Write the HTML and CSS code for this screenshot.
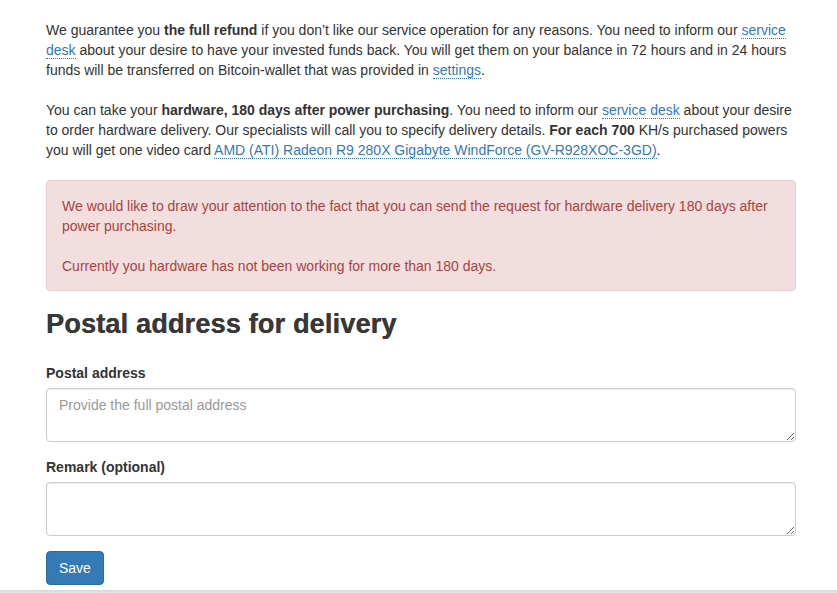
FILE: index.html
```html
<!DOCTYPE html>
<html lang="en">
<head>
<meta charset="utf-8">
<title>Hardware delivery</title>
<link rel="stylesheet" href="styles.css">
</head>
<body>
<div class="container">
  <p class="text">We guarantee you <b>the full refund</b> if you don’t like our service operation for any reasons. You need to inform our <a class="dlink" href="#">service desk</a> about your desire to have your invested funds back. You will get them on your balance in 72 hours and in 24 hours funds will be transferred on Bitcoin-wallet that was provided in <a class="dlink" href="#">settings</a>.</p>
  <p class="text">You can take your <b>hardware, 180 days after power purchasing</b>. You need to inform our <a class="dlink" href="#">service desk</a> about your desire to order hardware delivery. Our specialists will call you to specify delivery details. <b>For each 700</b> KH/s purchased powers you will get one video card <a class="dlink" href="#">AMD (ATI) Radeon R9 280X Gigabyte WindForce (GV-R928XOC-3GD)</a>.</p>
  <div class="alert">
    <p class="alert-p">We would like to draw your attention to the fact that you can send the request for hardware delivery 180 days after power purchasing.</p>
    <p class="alert-p last">Currently you hardware has not been working for more than 180 days.</p>
  </div>
  <h2 class="title">Postal address for delivery</h2>
  <form class="form">
    <div class="group">
      <label class="label" for="addr">Postal address</label>
      <textarea id="addr" class="field" rows="2" placeholder="Provide the full postal address"></textarea>
    </div>
    <div class="group">
      <label class="label" for="remark">Remark (optional)</label>
      <textarea id="remark" class="field" rows="2"></textarea>
    </div>
    <button type="button" class="btn">Save</button>
  </form>
</div>
<div class="footer-edge"></div>
</body>
</html>
```
FILE: styles.css
```css
html, body {
  margin: 0;
  padding: 0;
  background: #fff;
}
body {
  font-family: "Liberation Sans", Arial, Helvetica, sans-serif;
  font-size: 14px;
  line-height: 20px;
  color: #333;
}
.container {
  width: 750px;
  padding: 20px 0 0 46px;
}
.text {
  margin: 0 0 20px 0;
}
.text b {
  font-weight: 700;
}
.dlink {
  color: #337ab7;
  text-decoration: none;
  border-bottom: 1px dotted #337ab7;
}
.alert {
  margin: 0 0 19px 0;
  padding: 15px 15px 14px 15px;
  background: #f2dede;
  border: 1px solid #ebccd1;
  border-radius: 4px;
  color: #a94442;
}
.alert-p {
  margin: 0 0 20px 0;
}
.alert-p.last {
  margin-bottom: 0;
}
.title {
  margin: 0 0 24px 0;
  font-size: 27px;
  line-height: 29px;
  font-weight: 700;
  letter-spacing: 0.2px;
  color: #383838;
  text-shadow: 0.3px 0 0 #383838;
}
.form {
  margin: 0;
}
.group {
  margin-bottom: 15px;
}
.label {
  display: block;
  margin-bottom: 5px;
  font-weight: 700;
}
.field {
  display: block;
  box-sizing: border-box;
  width: 750px;
  height: 54px;
  margin: 0;
  padding: 6px 12px;
  font-family: "Liberation Sans", Arial, Helvetica, sans-serif;
  font-size: 14px;
  line-height: 20px;
  color: #555;
  background: #fff;
  border: 1px solid #ccc;
  border-radius: 4px;
  box-shadow: inset 0 1px 1px rgba(0,0,0,0.075);
  resize: vertical;
}
.field::placeholder {
  color: #999;
}
.btn {
  display: block;
  height: 34px;
  margin: 0;
  padding: 6px 12px;
  font-family: "Liberation Sans", Arial, Helvetica, sans-serif;
  font-size: 14px;
  line-height: 20px;
  color: #fff;
  background: #337ab7;
  border: 1px solid #2e6da4;
  border-radius: 4px;
  cursor: pointer;
}
.footer-edge {
  margin-top: 5px;
  height: 3px;
  background: linear-gradient(#d6d6d6, #e6e6e6);
}
```
